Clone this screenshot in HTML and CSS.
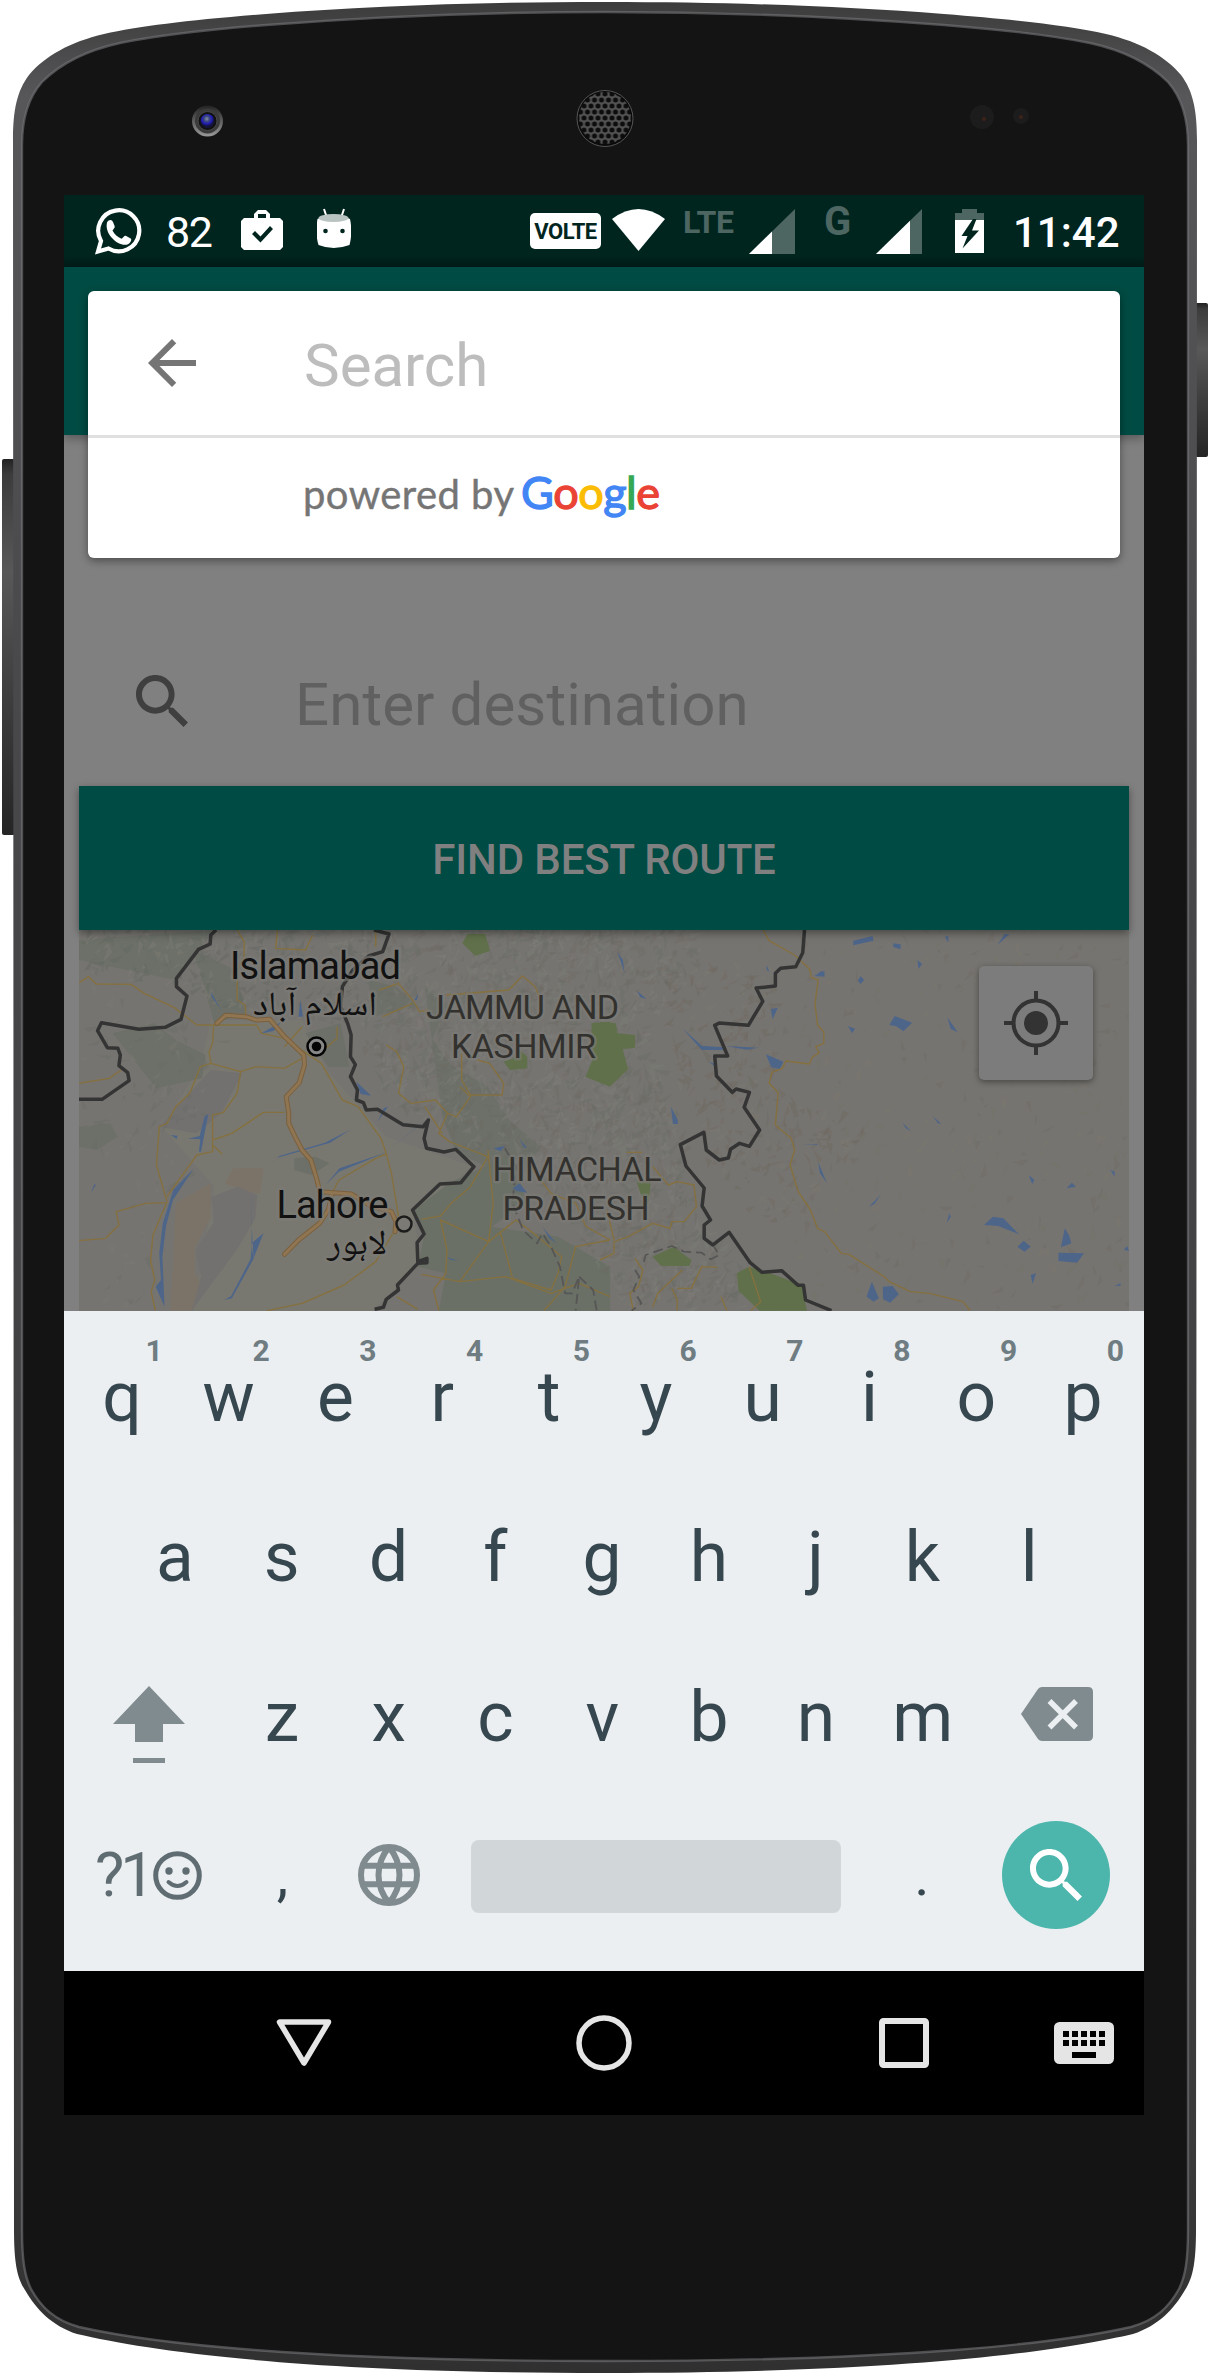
FILE: index.html
```html
<!DOCTYPE html>
<html lang="en">
<head>
<meta charset="utf-8">
<title>Find best route</title>
<link rel="stylesheet" href="styles.css">
</head>
<body>
<div class="phone">
  <svg class="shell" width="1210" height="2375" viewBox="0 0 1210 2375" aria-hidden="true">
    <defs>
      <linearGradient id="rim" x1="0" y1="0" x2="0" y2="1">
        <stop offset="0" stop-color="#3c3c3c"/><stop offset=".04" stop-color="#57575a"/><stop offset=".3" stop-color="#48484b"/><stop offset=".9" stop-color="#3a3a3a"/><stop offset="1" stop-color="#303030"/>
      </linearGradient>
      <linearGradient id="key" x1="0" y1="0" x2="0" y2="1">
        <stop offset="0" stop-color="#222"/><stop offset=".04" stop-color="#3c3c3c"/><stop offset=".3" stop-color="#585858"/><stop offset=".6" stop-color="#404040"/><stop offset="1" stop-color="#252525"/>
      </linearGradient>
      <linearGradient id="ring" x1="0" y1="0" x2="0" y2="1"><stop offset="0" stop-color="#222"/><stop offset="1" stop-color="#999"/></linearGradient>
      <radialGradient id="lens" cx=".45" cy=".35"><stop offset="0" stop-color="#8793a5"/><stop offset=".4" stop-color="#3a4580"/><stop offset=".75" stop-color="#1f1ab8"/><stop offset="1" stop-color="#15153a"/></radialGradient>
      <pattern id="mesh" width="7" height="12" patternUnits="userSpaceOnUse" x="601.5" y="112">
        <rect width="7" height="12" fill="#535353"/><circle cx="3.5" cy="6" r="2.5" fill="#0c0c0c"/><circle cx="0" cy="0" r="2.5" fill="#0c0c0c"/><circle cx="7" cy="0" r="2.5" fill="#0c0c0c"/><circle cx="0" cy="12" r="2.5" fill="#0c0c0c"/><circle cx="7" cy="12" r="2.5" fill="#0c0c0c"/>
      </pattern>
    </defs>
    <rect x="2" y="459" width="13" height="376" rx="2" fill="url(#key)"/>
    <rect x="1195" y="303" width="13" height="154" rx="2" fill="url(#key)"/>
    <path fill="url(#rim)" d="M605 2C480 2 370 6 266 14C190 20 140 26 104 34C70 42 45 56 29 75C17 91 13 110 13 140L14 2230C14 2262 17 2278 25 2290C36 2309 52 2326 77 2334C150 2351 300 2373 605 2373S1060 2351 1133 2334C1158 2326 1174 2309 1185 2290C1193 2278 1196 2262 1196 2230L1197 140C1197 110 1193 91 1181 75C1165 56 1140 42 1106 34C1070 26 1020 20 944 14C840 6 730 2 605 2Z"/>
    <path fill="#141414" stroke="#77777b" stroke-width="2.4" d="M605 12C480 12 370 17 266 25C190 31 150 37 120 43C88 50 62 62 42 82C28 98 22 118 22 145L22 2230C22 2262 25 2277 31 2289C41 2307 54 2320 79 2327C150 2343 300 2361 605 2361S1060 2343 1131 2327C1156 2320 1169 2307 1179 2289C1185 2277 1188 2262 1188 2230L1188 145C1188 118 1182 98 1168 82C1148 62 1122 50 1090 43C1060 37 1020 31 944 25C840 17 730 12 605 12Z" stroke-opacity=".6"/>
    <circle cx="207.500" cy="121" r="15.500" fill="url(#ring)"/><circle cx="207.500" cy="121" r="12.500" fill="#3a3a3a"/><circle cx="207.500" cy="121" r="9.500" fill="#111" stroke="#4a4a4a"/><circle cx="207.500" cy="121" r="7" fill="url(#lens)"/>
    <circle cx="605" cy="118.500" r="28" fill="#0b0b0b" stroke="#555" stroke-width="1"/><circle cx="605" cy="118" r="26" fill="url(#mesh)"/>
    <circle cx="982" cy="117" r="12" fill="#1d1c1c"/><circle cx="984" cy="119" r="2" fill="#3b231a"/><circle cx="1021" cy="116" r="8" fill="#1d1c1c"/><circle cx="1021" cy="117" r="2" fill="#3b231a"/>
  </svg>

  <main class="screen">
    <header class="status">
      <svg class="st-wa" width="48" height="72" viewBox="30 0 48 72"><path d="M34 56.500l3-10.500A20.500 20.500 0 1 1 44.500 53.500z" fill="none" stroke="#fff" stroke-width="4.200"/><path fill="#fff" d="M43 27.500c2-3.500 5-3 6-.5l1.700 4.200c.5 1.500-1.700 3.300-2.200 4.300 2 4 5 6.500 9 8.300 1.500-1 3-3.500 4.200-3l5 2.700c1.500 1-.3 4.500-2.700 5.700-8 3.500-24-9-21-21.700z"/></svg>
      <span class="st-count">82</span>
      <svg class="st-bag" width="42" height="72" viewBox="177 0 42 72"><path fill="#fff" fill-rule="evenodd" d="M190 23v-4l4-4h8l4 4v4h10l3 3v26l-3 3h-36l-3-3V26l3-3zM194 23h8v-4h-8zM188 39l8.500 8.500L209 34l-3-3-9.500 10.500L191 36z"/></svg>
      <svg class="st-bot" width="34" height="72" viewBox="253 0 34 72"><path d="M260 14l3 9M280 14l-3 9" stroke="#fff" stroke-width="2"/><path fill="#fff" d="M253.500 24q16-8 32.500 0c2 9 1.500 19-.5 26q-16 6-31 0c-2.500-8-2.500-18-1-26z"/><ellipse cx="269.500" cy="23" rx="15" ry="4" fill="#b9c4c2"/><circle cx="261.500" cy="36" r="2.300" fill="#00251f"/><circle cx="278.500" cy="36" r="2.300" fill="#00251f"/></svg>
      <span class="st-volte">VOLTE</span>
      <svg class="st-wifi" width="53" height="72" viewBox="548 0 53 72"><path fill="#fff" d="M548 24q26.500-20 53 0L574.500 56z"/></svg>
      <span class="st-lte">LTE</span>
      <svg class="st-sig1" width="46" height="72" viewBox="684 0 46 72"><path fill="#4d6662" d="M730 14v45h-46z"/><path fill="#fff" d="M707 36.500V59h-23z"/></svg>
      <span class="st-g">G</span>
      <svg class="st-sig2" width="46" height="72" viewBox="811 0 46 72"><path fill="#4d6662" d="M857 14v45h-46z"/><path fill="#fff" d="M845 25.700V59h-34z"/></svg>
      <svg class="st-batt" width="29" height="72" viewBox="890 0 29 72"><path fill="#4d6662" d="M890 18h7v-4h15v4h7v7h-29z"/><path fill="#fff" d="M890 25h29v33h-29z"/><path fill="#00251f" d="M908 24l-11.500 17h6l-5 12.500L914 35.500h-7l4.500-11.500z"/></svg>
      <span class="st-time">11:42</span>
    </header>

    <div class="appbar"></div>
    <section class="content">
      <div class="field">
        <svg width="52" height="52" viewBox="3 3 17.500 17.500"><path fill="#3f3f3f" d="M15.500 14h-.79l-.28-.27C15.410 12.590 16 11.110 16 9.500 16 5.910 13.090 3 9.500 3S3 5.910 3 9.500 5.910 16 9.500 16c1.610 0 3.090-.59 4.230-1.570l.27.28v.79l5 4.990L20.490 19l-4.990-5zm-6 0C7.010 14 5 11.990 5 9.500S7.010 5 9.500 5 14 7.010 14 9.500 11.990 14 9.500 14z"/></svg>
        <span class="hint">Enter destination</span>
      </div>
      <div class="find">FIND BEST ROUTE</div>
      <div class="map">
        <svg class="tiles" width="1050" height="381" viewBox="0 0 1050 381">
          <rect width="1050" height="381" fill="#767470"/>
          <g transform="translate(-19 -10) scale(.35077 .33333)">
            <path fill="#797870" d="M430 300L690 300 760 450 930 650 1180 740 1005 870 1030 1030 890 1172 380 1172 440 800 290 620 400 440z"/>
            <path fill="#6c7068" d="M54 60L440 30 330 180 54 120zM150 340l120-30 60 50 85 45-10 70-130 30zM54 620l90-10 20 40-60 40-50-10zM668 715l60-5 40 20-50 35-50-15zM380 90l120 60 30 130-90 30zM700 340l100-30 25 130-60 0zM1040 200l60 60-40 100 60 80 100 60 60 100 90 80-60 100-180-80-40-110zM880 180l80 20 60 60-130 30z"/>
            <path fill="#6a7066" d="M1110 790L1290 700 1330 850 1230 920 1420 950 1568 1040 1568 1172 1080 1172 1100 1060 1020 1040 1040 940 1010 870z"/>
            <path fill="#7b7368" d="M495 745h85l-10 75-40-5-60-25zM330 850l100-60v100l-45 90 0 80 15 30-25 82h-60z"/>
            <path fill="#727170" d="M432 830l75-30 55 25-5 70-50 90-130 185 25-100-15-80 50-80zM430 450l90 10-60 120-70 60-110-20z"/>
          </g>
          <g id="relief"></g>
          <g transform="translate(-19 -10) scale(.35077 .33333)">
            <path fill="#60704a" d="M1147 70l15-28 50 0 14 50-42 16zM1515 310l53-5V500l-70-30 20-50zM1265 425l40-15 5-20 22 20v35l-50 5z"/>
            <path fill="#4e658a" d="M412 590L423 582 402 695 396 695 400 658 365 656 398 648zM315 645l20 2-2 10zM382 745l-60 95-20 80-10 90 6 150-25-60 15-20-5-80 10-90 30-100zM580 940l-30 80-60 115-22 5 20-12 55-110 5-50zM548 800l-2 170 6 50-6-110zM830 628l-60 40-150 45-40 45 45-50 130-40zM935 695l-140 60-38 40 40-50zM1050 595l-115 95 80-65zM845 485l42 42-30-5zM430 215l30 55-28-40zM905 605l18-40 12-5zM1290 805l20-15 22 28-30-5zM1235 685l35-8-15 17zM1310 657l22 28-10-3zM1375 920l40 50-20-15zM88 820l10-28 4 3zM1170 523l85-1v3zM570 342l60-35-20 25zM680 290l5-50 8 50zM1010 240l12-20-5 20zM820 520l12-25zM1100 1010l35 12-20-2z"/>
          </g>
          <g transform="translate(521 -10) scale(.35077 .33333)">
            <path fill="#60704a" d="M0 305l45 5 5 30 50 5v38l-35 5 15 60-50 50-30-15zM105 785l40 0-8 70-22-35zM150 1010l60-30 50 40-5 18-80 0zM390 1060l35-20 60 20 90 35 15 77H455l-60-60z"/>
            <path fill="#4e658a" d="M722 62l55-14 3 14-58 14zM835 70l22 3v15l-20-6zM905 120l13 12-10 15zM983 50l10-2v20zM1133 75l20-32 14 0zM735 182l8-14 10 12-10 12zM612 168l18-14h10v16zM487 267l20-4-15 35zM707 318l20 8-8 14zM825 315l15-27 50 20-25 26-20-15zM990 292l30 45-20-10zM50 95l15 25 5 40zM105 212l28 25-18-5zM235 325l55 52 60 5v8l-60 0zM358 378l95 5-35 6zM473 403l50 22-10 22-25-5zM202 560l20 40v12h-14zM862 608l25 25-15-8zM948 587l25 25-10-2zM622 725l25 65-20-30zM767 860l35-38-20 30zM575 673h45v2zM725 697l35 16zM1222 765l17 15-7 12zM1330 805l15-17 12 12zM1455 750l12 5v15zM1095 915l25-25 30 5 45 48-60-25zM1190 980l18-18 20 18-18 15zM1325 925l12 20 7 25-30 12zM1307 998l73 2-20 28-53-5zM988 910l8-30 4 10zM1228 1065l15-5-10 32zM1467 1098l17-8v7zM760 1130l15-45 20 50-15 10zM806 1100l28-2 18 25-25 25-20-10zM1493 990l10-12 5 14zM475 150l0-15 8 20zM310 425l22 8-5 6z"/>
          </g>
          <g class="roads" transform="translate(-19 -10) scale(.35077 .33333)">
            <path d="M54 188L82 170 103 192 203 193 240 220 325 262 390 315 560 315 575 340 640 355 745 430 805 540 850 560 915 655 930 700 945 760 965 890M505 30L525 65 525 110 505 150 505 240 528 255 530 290M620 30L615 85 700 90 720 45M54 490L140 475 175 450M438 315L435 370 425 395 430 430 400 440 370 520 330 560 305 610 283 620 275 735 305 845 265 945 258 1020 270 1080 260 1115 272 1172M300 848L245 850 160 875 168 915 130 955 54 962M305 830L390 705 435 695 435 585 465 578 505 520 515 455 430 430M515 455L560 440 640 445 690 415M435 660L490 640 580 577 640 577M435 675L462 702M780 810L795 780 900 715 930 702M590 1172L690 1150 810 1095 900 1025 955 930M1030 898L1085 888 1115 850 1170 800 1220 710 1110 665 1080 640 1105 580 1130 590 1170 530 1140 500M1220 690L1235 850 1222 965 1085 900 1103 990 1100 1060 1065 1110 1080 1172M1222 965L1300 900 1350 940 1430 1010 1420 1060 1400 1110 1290 1075 1255 935M1222 965L1140 1085 1030 1063M1140 1085L1270 1070 1400 1120 1480 1090 1568 1130M930 375L960 395 980 440 965 520 1000 550 1070 540 1105 580M1040 560L1090 640M1280 210L1318 168 1355 200 1370 240M1280 210L1100 225M1190 420L1225 430 1265 490 1260 525 1170 525 1145 480 1145 400M910 210L965 190 1005 240 1025 275 1050 270M1005 250L920 290M960 1130L1020 1168M1380 1172L1440 1100 1470 980 1568 960M900 30L900 80M690 320L640 380M790 320V355L740 400M1340 740L1400 820 1470 850 1500 920 1568 960"/>
          </g>
          <g class="roads" transform="translate(521 -10) scale(.35077 .33333)">
            <path d="M465 30L482 62 555 105 598 148 602 172 622 180 613 250 620 315 638 335 638 370 615 380 625 398 605 412 597 432 530 423 520 445 490 457 482 490 508 518 500 615 545 655 555 690 542 735 565 815 600 870 620 925 640 935 688 1000 710 1003 810 1070 825 1085 885 1115 940 1120 1035 1145 1055 1172M150 740L195 795 220 785 268 795 275 860 240 905 205 905 200 925 150 910 80 950 40 965 40 1000 0 1020M100 1015L122 1050 110 1100 85 1120 95 1172M150 1160L165 1120 235 1050M205 1105L220 1140 220 1172M220 1105L260 1105 290 1040 335 1042M425 1040L458 1145 430 1172M75 697L120 697M345 1130L362 1172M20 870L40 960"/>
          </g>
          <g class="motorway" transform="translate(-19 -10) scale(.35077 .33333)">
            <path d="M447 310L472 286 530 290 560 300 598 298 640 350 695 405 697 435 682 488 645 530 652 580 652 610 670 650 690 690 715 720 730 770 740 812M640 1003L680 960 740 910 765 870 775 820M740 815L830 822 890 860 945 875 958 905 955 935"/>
            <path class="core" d="M447 310L472 286 530 290 560 300 598 298 640 350 695 405 697 435 682 488 645 530 652 580 652 610 670 650 690 690 715 720 730 770 740 812M640 1003L680 960 740 910 765 870 775 820M740 815L830 822 890 860 945 875 958 905 955 935"/>
          </g>
          <g class="border" transform="translate(-19 -10) scale(.35077 .33333)">
            <path d="M445 30L430 45 428 72 395 88 332 175V200L362 228 345 298 300 322 225 328 118 308 107 332 135 383 165 385 172 405 168 437 193 458 197 482 120 538 54 538M895 30L938 42 920 95 880 108 835 150 805 200 800 260 820 310 830 345 828 410 842 434 828 470 848 510 845 540 865 548 873 570 905 568 978 614 1035 620 1050 600 1038 655 1045 685 1095 696 1128 688 1180 740 1143 788 1083 792 1005 870 1038 942 1018 968 1020 1025 1046 1015 1046 1028 1020 1030 962 1095 965 1110 930 1138 922 1162 897 1168"/>
            <path class="dash" d="M1268 685L1300 740 1290 850 1320 930 1360 970 1375 940 1400 980 1425 1040 1440 1120 1460 1120 1480 1070 1470 1172M1480 1070L1520 1110 1530 1172"/>
          </g>
          <g class="border" transform="translate(521 -10) scale(.35077 .33333)">
            <path d="M583 30L578 98 558 140 515 145 500 160V198L445 204 464 244 423 316 340 309 327 316 364 408H327L332 468 377 517 388 507 426 517 411 562 455 630 426 679 398 670 372 688 366 714 340 720 303 690 296 637 229 674 245 738 297 804 291 858 315 900 297 915V955L322 975 368 937 428 1028 462 1057 518 1052 565 1096H580L586 1140 660 1172"/>
            <path class="dash" d="M125 1025L130 1005 205 978 240 995 290 998 315 1018 340 1005 325 980M100 1050L112 1070 95 1110 118 1150 90 1172"/>
          </g>
          <g class="label region" text-anchor="middle">
            <text x="443.500" y="88.500" textLength="193">JAMMU AND</text><text x="444.500" y="127.500" textLength="145">KASHMIR</text>
            <text x="498" y="250.500" textLength="169">HIMACHAL</text><text x="497" y="289.500" textLength="147">PRADESH</text>
          </g>
          <g class="label city" text-anchor="middle">
            <text x="236.500" y="48.500" textLength="171">Islamabad</text><text x="253.500" y="288" textLength="112">Lahore</text>
            <text class="urdu" x="236" y="85" textLength="124" lengthAdjust="spacingAndGlyphs">اسلام آباد</text><text class="urdu" x="278" y="324" textLength="60" lengthAdjust="spacingAndGlyphs">لاہور</text>
          </g>
          <circle cx="237.500" cy="116.500" r="9" fill="#888" stroke="#050505" stroke-width="2.500"/><circle cx="237.500" cy="116.500" r="4.800" fill="#050505"/>
          <circle cx="325" cy="294" r="7.500" fill="#7b7a74" stroke="#1c1c1c" stroke-width="2.500"/>
        </svg>
        <div class="locate"><svg width="66" height="66" viewBox="-33 -33 66 66"><circle r="22.500" fill="none" stroke="#333" stroke-width="4"/><circle r="12" fill="#333"/><path d="M0-32v9M0 23v9M-32 0h9M23 0h9" stroke="#333" stroke-width="4"/></svg></div>
      </div>
    </section>

    <section class="keyboard">
      <div class="row"><div class="key">q<i>1</i></div><div class="key">w<i>2</i></div><div class="key">e<i>3</i></div><div class="key">r<i>4</i></div><div class="key">t<i>5</i></div><div class="key">y<i>6</i></div><div class="key">u<i>7</i></div><div class="key">i<i>8</i></div><div class="key">o<i>9</i></div><div class="key">p<i>0</i></div></div>
      <div class="row"><div class="key">a</div><div class="key">s</div><div class="key">d</div><div class="key">f</div><div class="key">g</div><div class="key">h</div><div class="key">j</div><div class="key">k</div><div class="key">l</div></div>
      <div class="row">
        <div class="wide"><svg width="72" height="78" viewBox="0 0 72 78"><path fill="#808b8f" d="M36 0l36 38H50v18H22V38H0zM20 72h32v5H20z"/></svg></div>
        <div class="key">z</div><div class="key">x</div><div class="key">c</div><div class="key">v</div><div class="key">b</div><div class="key">n</div><div class="key">m</div>
        <div class="wide del"><svg width="72" height="54" viewBox="0 0 72 54"><path fill="#808b8f" d="M0 27L17 2q1.500-2 4-2h46q5 0 5 5v44q0 5-5 5H21q-2.500 0-4-2z"/><path d="M28.500 14l26.500 26.500M55 14L28.500 40.500" stroke="#ebeff2" stroke-width="5.500"/></svg></div>
      </div>
      <div class="row last">
        <div class="symbols">?1<svg width="49" height="49" viewBox="-24.500 -24.500 49 49"><circle r="21.800" fill="none" stroke="#5f6d73" stroke-width="5"/><circle cx="-8.500" cy="-4.500" r="3.700" fill="#5f6d73"/><circle cx="8.500" cy="-4.500" r="3.700" fill="#5f6d73"/><path d="M-9 6.500q9 8 18 0" fill="none" stroke="#5f6d73" stroke-width="4" stroke-linecap="round"/></svg></div>
        <div class="key">,</div>
        <div class="key globe"><svg width="62" height="62" viewBox="-31 -31 62 62" fill="none" stroke="#808b8f" stroke-width="6"><circle r="28"/><path d="M-27-9.200h54M-27 9.200h54M0-28c-14 17-14 39 0 56M0-28c14 17 14 39 0 56"/></svg></div>
        <div class="space"></div>
        <div class="key">.</div>
        <div class="go"><svg width="52" height="52" viewBox="3 3 17.500 17.500"><path fill="#fff" d="M15.500 14h-.79l-.28-.27C15.410 12.590 16 11.110 16 9.500 16 5.910 13.090 3 9.500 3S3 5.910 3 9.500 5.910 16 9.500 16c1.610 0 3.090-.59 4.230-1.570l.27.28v.79l5 4.990L20.490 19l-4.990-5zm-6 0C7.010 14 5 11.990 5 9.500S7.010 5 9.500 5 14 7.010 14 9.500 11.990 14 9.500 14z"/></svg></div>
      </div>
    </section>

    <nav class="nav">
      <svg width="58" height="52" viewBox="0 0 58 52"><path d="M4.500 5h49L29 46z" fill="none" stroke="#e5e5e5" stroke-width="5.500" stroke-linejoin="round"/></svg>
      <svg width="58" height="58" viewBox="-29 -29 58 58"><circle r="25" fill="none" stroke="#e5e5e5" stroke-width="5.500"/></svg>
      <svg width="50" height="50" viewBox="0 0 50 50"><rect x="3" y="3" width="44" height="44" rx="1.500" fill="none" stroke="#e5e5e5" stroke-width="6"/></svg>
      <svg width="60" height="42" viewBox="0 0 60 42"><rect width="60" height="42" rx="5.500" fill="#e5e5e5"/><path d="M9 12h42M9 21h42" stroke="#000" stroke-width="6" stroke-dasharray="6 3"/><path d="M18 33h24" stroke="#000" stroke-width="6"/></svg>
    </nav>

    <div class="dialog">
      <div class="query">
        <svg width="48" height="48" viewBox="4 4 16 16"><path fill="#757575" d="M20 11H7.830l5.590-5.590L12 4l-8 8 8 8 1.410-1.410L7.830 13H20v-2z"/></svg>
        <span class="placeholder">Search</span>
      </div>
      <div class="powered">
        <svg width="400" height="90" viewBox="0 0 400 90"><text class="by" x="2" y="56" textLength="211">powered by</text><text class="google" x="220" y="56" textLength="139"><tspan fill="#4285f4" stroke="#4285f4">G</tspan><tspan fill="#ea4335" stroke="#ea4335">o</tspan><tspan fill="#fbbc05" stroke="#fbbc05">o</tspan><tspan fill="#4285f4" stroke="#4285f4">g</tspan><tspan fill="#34a853" stroke="#34a853">l</tspan><tspan fill="#ea4335" stroke="#ea4335">e</tspan></text></svg>
      </div>
    </div>
  </main>
</div>
<script src="relief.js"></script>
</body>
</html>
```
FILE: styles.css
```css
* { box-sizing: border-box; }
body { margin: 0; background: #fff; font-family: Roboto, "Liberation Sans", sans-serif; }
svg { display: block; flex: none; }
.phone { position: relative; width: 1210px; height: 2375px; padding: 195px 66px 260px 64px; overflow: hidden; }
.shell { position: absolute; left: 0; top: 0; }
.screen { position: relative; display: flex; flex-direction: column; width: 1080px; height: 1920px; background: #808080; overflow: hidden; }

.status { display: flex; height: 72px; flex: none; background: linear-gradient(#00251f 84%, #001c18); color: #fff; line-height: 72px; white-space: nowrap; }
.st-wa { margin-left: 30px; }
.st-count { width: 46px; margin-left: 24px; font-size: 43px; padding-top: 1px; letter-spacing: -1.5px; }
.st-bag { margin-left: 29px; }
.st-bot { margin-left: 34px; }
.st-volte { width: 71px; height: 36px; margin: 18px 0 0 179px; background: #fff; color: #00251f; border-radius: 5px; font-size: 22px; font-weight: 700; line-height: 37px; text-align: center; letter-spacing: -.5px; }
.st-wifi { margin-left: 11px; }
.st-lte { width: 54px; margin-left: 18px; color: #4d6662; font-size: 32px; font-weight: 700; line-height: 54px; letter-spacing: -.3px; }
.st-sig1 { margin-left: 12px; }
.st-g { width: 28px; margin-left: 29px; color: #4d6662; font-size: 40px; font-weight: 700; line-height: 54px; }
.st-sig2 { margin-left: 24px; }
.st-batt { margin-left: 33px; }
.st-time { margin-left: 29px; font-size: 42px; font-weight: 500; padding-top: 2px; }

.appbar { height: 168px; flex: none; background: #004b43; box-shadow: 0 3px 10px rgba(0,0,0,.35); z-index: 1; }
.content { display: flex; flex-direction: column; height: 876px; flex: none; padding: 188px 15px 0; }
.field { display: flex; align-items: center; height: 163px; padding-left: 57px; }
.field svg { margin-top: -7px; }
.hint { margin-left: 107px; font-size: 60px; letter-spacing: .1px; color: #606060; }
.find { height: 144px; background: #004b43; color: #808080; font-size: 42px; font-weight: 500; line-height: 147px; letter-spacing: -.15px; text-align: center; box-shadow: 0 3px 8px rgba(0,0,0,.4); z-index: 1; }
.map { position: relative; height: 381px; overflow: hidden; }
.roads path { fill: none; stroke: #85703f; stroke-width: 1.4; vector-effect: non-scaling-stroke; stroke-linejoin: round; }
.motorway path { fill: none; stroke: #7b603e; stroke-width: 5; vector-effect: non-scaling-stroke; stroke-linejoin: round; stroke-linecap: round; }
.motorway .core { stroke: #8f7552; stroke-width: 3; }
.border path { fill: none; stroke: #343434; stroke-width: 3.5; vector-effect: non-scaling-stroke; stroke-linejoin: round; }
.border .dash { stroke: #565656; stroke-width: 1.8; stroke-dasharray: 10 5; }
.label { paint-order: stroke; stroke: #7c7b77; stroke-width: 5px; stroke-opacity: .65; stroke-linejoin: round; }
.region { font-size: 34px; fill: #32312e; }
.city { font-size: 38px; fill: #111; }
.urdu { font-family: "Noto Naskh Arabic", "Noto Sans Arabic", "DejaVu Sans", sans-serif; font-size: 34px; }
.locate { position: absolute; left: 900px; top: 36px; width: 114px; height: 114px; display: flex; align-items: center; justify-content: center; background: #7c7c7c; border-radius: 5px; box-shadow: 0 2px 6px rgba(0,0,0,.4); }

.keyboard { display: flex; flex-direction: column; height: 660px; flex: none; padding-top: 6px; background: #ebeff2; z-index: 2; }
.row { display: flex; align-items: center; height: 160px; padding-left: 5px; }
.row:nth-child(2) { padding-left: 58px; }
.key { position: relative; width: 106.8px; height: 160px; font-size: 69.5px; line-height: 161px; color: #37474f; text-align: center; text-indent: -1px; }
.key i { position: absolute; right: 13px; top: 19px; font: 700 30px/30px Roboto, sans-serif; color: #6f7c81; }
.wide { display: flex; justify-content: center; width: 160px; padding-top: 15px; }
.del { padding: 0 0 6px; }
.last { height: 156px; }
.last .key { font-size: 58px; text-indent: 0; }
.symbols { display: flex; align-items: center; width: 160px; padding-left: 26px; font-size: 62px; letter-spacing: -4px; line-height: 158px; color: #5f6d73; white-space: nowrap; }
.symbols svg { margin-left: auto; margin-right: 27px; }
.globe { display: flex; align-items: center; justify-content: center; }
.space { width: 370px; height: 73px; margin: 3px 28px 0 28px; border-radius: 8px; background: #d1d6d9; }
.go { display: flex; align-items: center; justify-content: center; width: 108px; height: 108px; margin-left: 27px; border-radius: 50%; background: #4db6ac; }

.nav { display: grid; grid-template-columns: 300px 300px 300px 60px; align-items: center; justify-items: center; height: 144px; padding-left: 90px; background: #000; z-index: 2; }

.dialog { position: absolute; left: 24px; top: 96px; width: 1032px; height: 267px; background: #fff; border-radius: 6px; box-shadow: 0 3px 8px rgba(0,0,0,.4); z-index: 3; }
.query { display: flex; align-items: center; height: 147px; padding-left: 60px; border-bottom: 3px solid #e0e0e0; }
.placeholder { margin: 4px 0 0 107px; padding-left: 1px; font-size: 60px; color: #bdbdbd; }
.powered { padding: 15px 0 0 213px; }
.by { font-family: Lato, sans-serif; font-size: 40px; fill: #757575; stroke: #757575; stroke-width: .4px; }
.google { font-family: Lato, sans-serif; font-size: 45px; stroke-width: 1.3px; }
```
FILE: relief.js
```js
// Scatters small shaded facets over the mountainous parts of the map.
(function () {
  var seed = 7;
  function rnd() { seed = (seed * 16807) % 2147483647; return seed / 2147483647; }
  function inside(x, y, p) {
    var c = false;
    for (var i = 0, j = p.length - 1; i < p.length; j = i++) {
      if ((p[i][1] > y) !== (p[j][1] > y) &&
          x < (p[j][0] - p[i][0]) * (y - p[i][1]) / (p[j][1] - p[i][1]) + p[i][0]) c = !c;
    }
    return c;
  }
  var areas = [
    { n: 1900, o: .36, size: 15, c: ['#82807d', '#686a65', '#6e6963', '#7d7f7b', '#666b67'],
      p: [[285, 0], [640, 0], [600, 60], [565, 120], [600, 200], [610, 290], [700, 381], [545, 381], [500, 310], [440, 240], [375, 215], [320, 185], [280, 130]] },
    { n: 340, o: .4, size: 14, c: ['#62665f', '#828079', '#6a6e68'],
      p: [[0, 0], [290, 0], [270, 95], [140, 85], [95, 60], [0, 45]] },
    { n: 120, o: .35, size: 13, c: ['#666a63', '#7e7c75'],
      p: [[0, 60], [140, 110], [110, 230], [60, 381], [20, 381], [30, 260], [0, 200]] },
    { n: 300, o: .38, size: 14, c: ['#6b645c', '#7c7970', '#70675f'],
      p: [[570, 40], [690, 40], [700, 150], [780, 210], [700, 300], [620, 250], [600, 160]] },
    { n: 350, o: .28, size: 13, c: ['#6b645c', '#7e7b70', '#6e7266'],
      p: [[680, 0], [1050, 0], [1050, 381], [720, 381], [650, 200]] }
  ];
  var html = '';
  areas.forEach(function (a) {
    var paths = a.c.map(function () { return ''; });
    for (var k = 0; k < a.n;) {
      var x = rnd() * 1050, y = rnd() * 381;
      if (!inside(x, y, a.p)) continue;
      var t = -1 + (rnd() - .5) * 2.2, l = 4 + rnd() * a.size, w = 1.5 + rnd() * 5;
      var dx = Math.cos(t), dy = Math.sin(t), m = rnd();
      paths[k % a.c.length] += 'M' + x.toFixed(1) + ' ' + y.toFixed(1) +
        'l' + (dx * l * m - dy * w).toFixed(1) + ' ' + (dy * l * m + dx * w).toFixed(1) +
        'L' + (x + dx * l).toFixed(1) + ' ' + (y + dy * l).toFixed(1) + 'z';
      k++;
    }
    paths.forEach(function (d, i) { html += '<path fill="' + a.c[i] + '" opacity="' + a.o + '" d="' + d + '"/>'; });
  });
  document.getElementById('relief').innerHTML = html;
})();
```
